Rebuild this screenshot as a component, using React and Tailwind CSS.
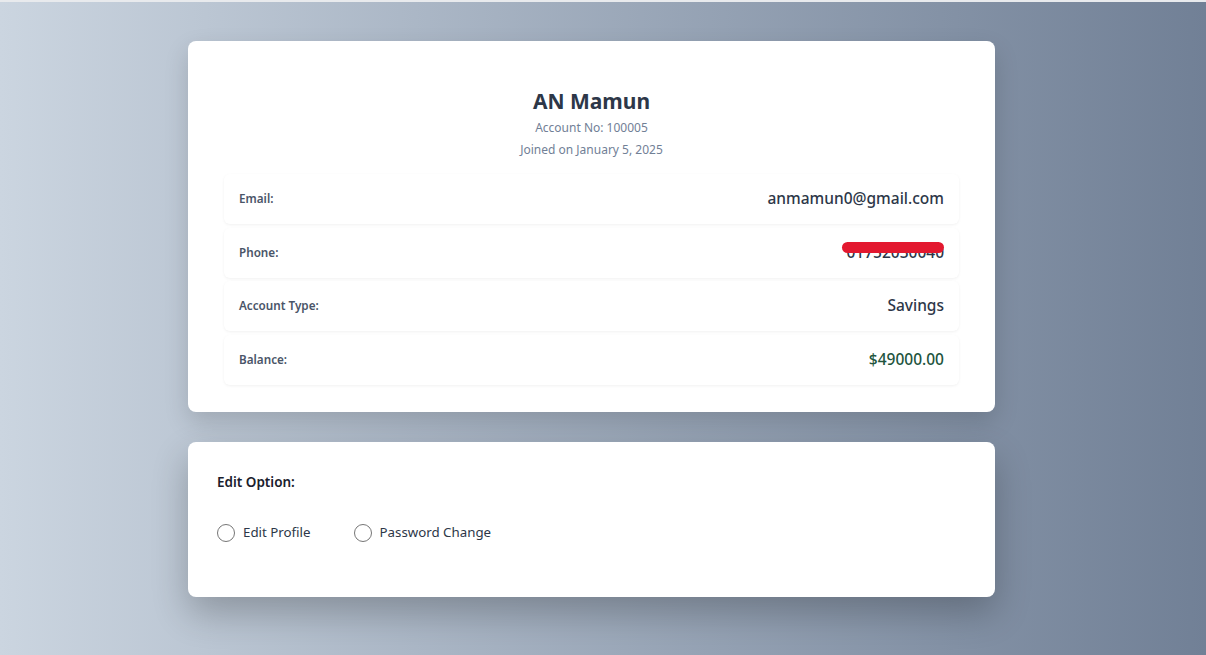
import React from 'react';

const rows = [
  { label: 'Email:', value: 'anmamun0@gmail.com' },
  { label: 'Phone:', value: '01752030040', hidden: true },
  { label: 'Account Type:', value: 'Savings' },
  { label: 'Balance:', value: '$49000.00', money: true },
];

function InfoRow({ label, value, hidden, money }) {
  return (
    <div className="flex h-[50px] items-center justify-between rounded-md bg-white px-[15px] shadow-[0_1px_3px_rgba(0,0,0,0.06)]">
      <span className="text-[11.7px] font-semibold text-[#4a5568]">{label}</span>
      <span
        className={
          'relative text-[15.5px] font-medium ' +
          (money ? 'text-[#22543d]' : 'text-[#2d3748]')
        }
      >
        {value}
        {hidden && (
          <span className="absolute left-[-4px] right-0 top-[1px] h-[11px] rounded-full bg-[#e3182f]" />
        )}
      </span>
    </div>
  );
}

function Radio({ label }) {
  return (
    <label className="flex items-center gap-2">
      <span className="h-[18px] w-[18px] rounded-full border border-[#767676] bg-white" />
      <span className="text-[13.3px] text-[#2d3748]">{label}</span>
    </label>
  );
}

export default function App() {
  return (
    <div
      className="min-h-[655px] border-t-2 border-[#e8eaed] bg-gradient-to-r from-[#cbd5e0] to-[#718096] pr-[23px] pt-[39px]"
      style={{ fontFamily: '"Noto Sans", "Open Sans", sans-serif' }}
    >
      <div className="mx-auto flex w-[807px] flex-col gap-[30px]">
        <div className="rounded-lg bg-white px-9 pb-[27.5px] pt-[46px] shadow-[0_10px_25px_rgba(0,0,0,0.15)]">
          <div className="flex flex-col items-center">
            <h1 className="text-[21px] font-bold leading-[28px] text-[#2d3748]">AN Mamun</h1>
            <p className="mt-[2px] text-[12px] leading-[22px] text-[#718096]">Account No: 100005</p>
            <p className="text-[12px] leading-[22px] text-[#718096]">Joined on January 5, 2025</p>
          </div>
          <div className="mt-[13px] flex flex-col gap-[3.5px]">
            {rows.map((r) => (
              <InfoRow key={r.label} {...r} />
            ))}
          </div>
        </div>

        <div className="h-[155px] rounded-lg bg-white px-[29px] pt-[30px] shadow-[0_16px_36px_rgba(0,0,0,0.24)]">
          <h2 className="text-[13.5px] font-semibold text-[#1a202c]">Edit Option:</h2>
          <div className="mt-[31px] flex items-center gap-[43px]">
            <Radio label="Edit Profile" />
            <Radio label="Password Change" />
          </div>
        </div>
      </div>
    </div>
  );
}
